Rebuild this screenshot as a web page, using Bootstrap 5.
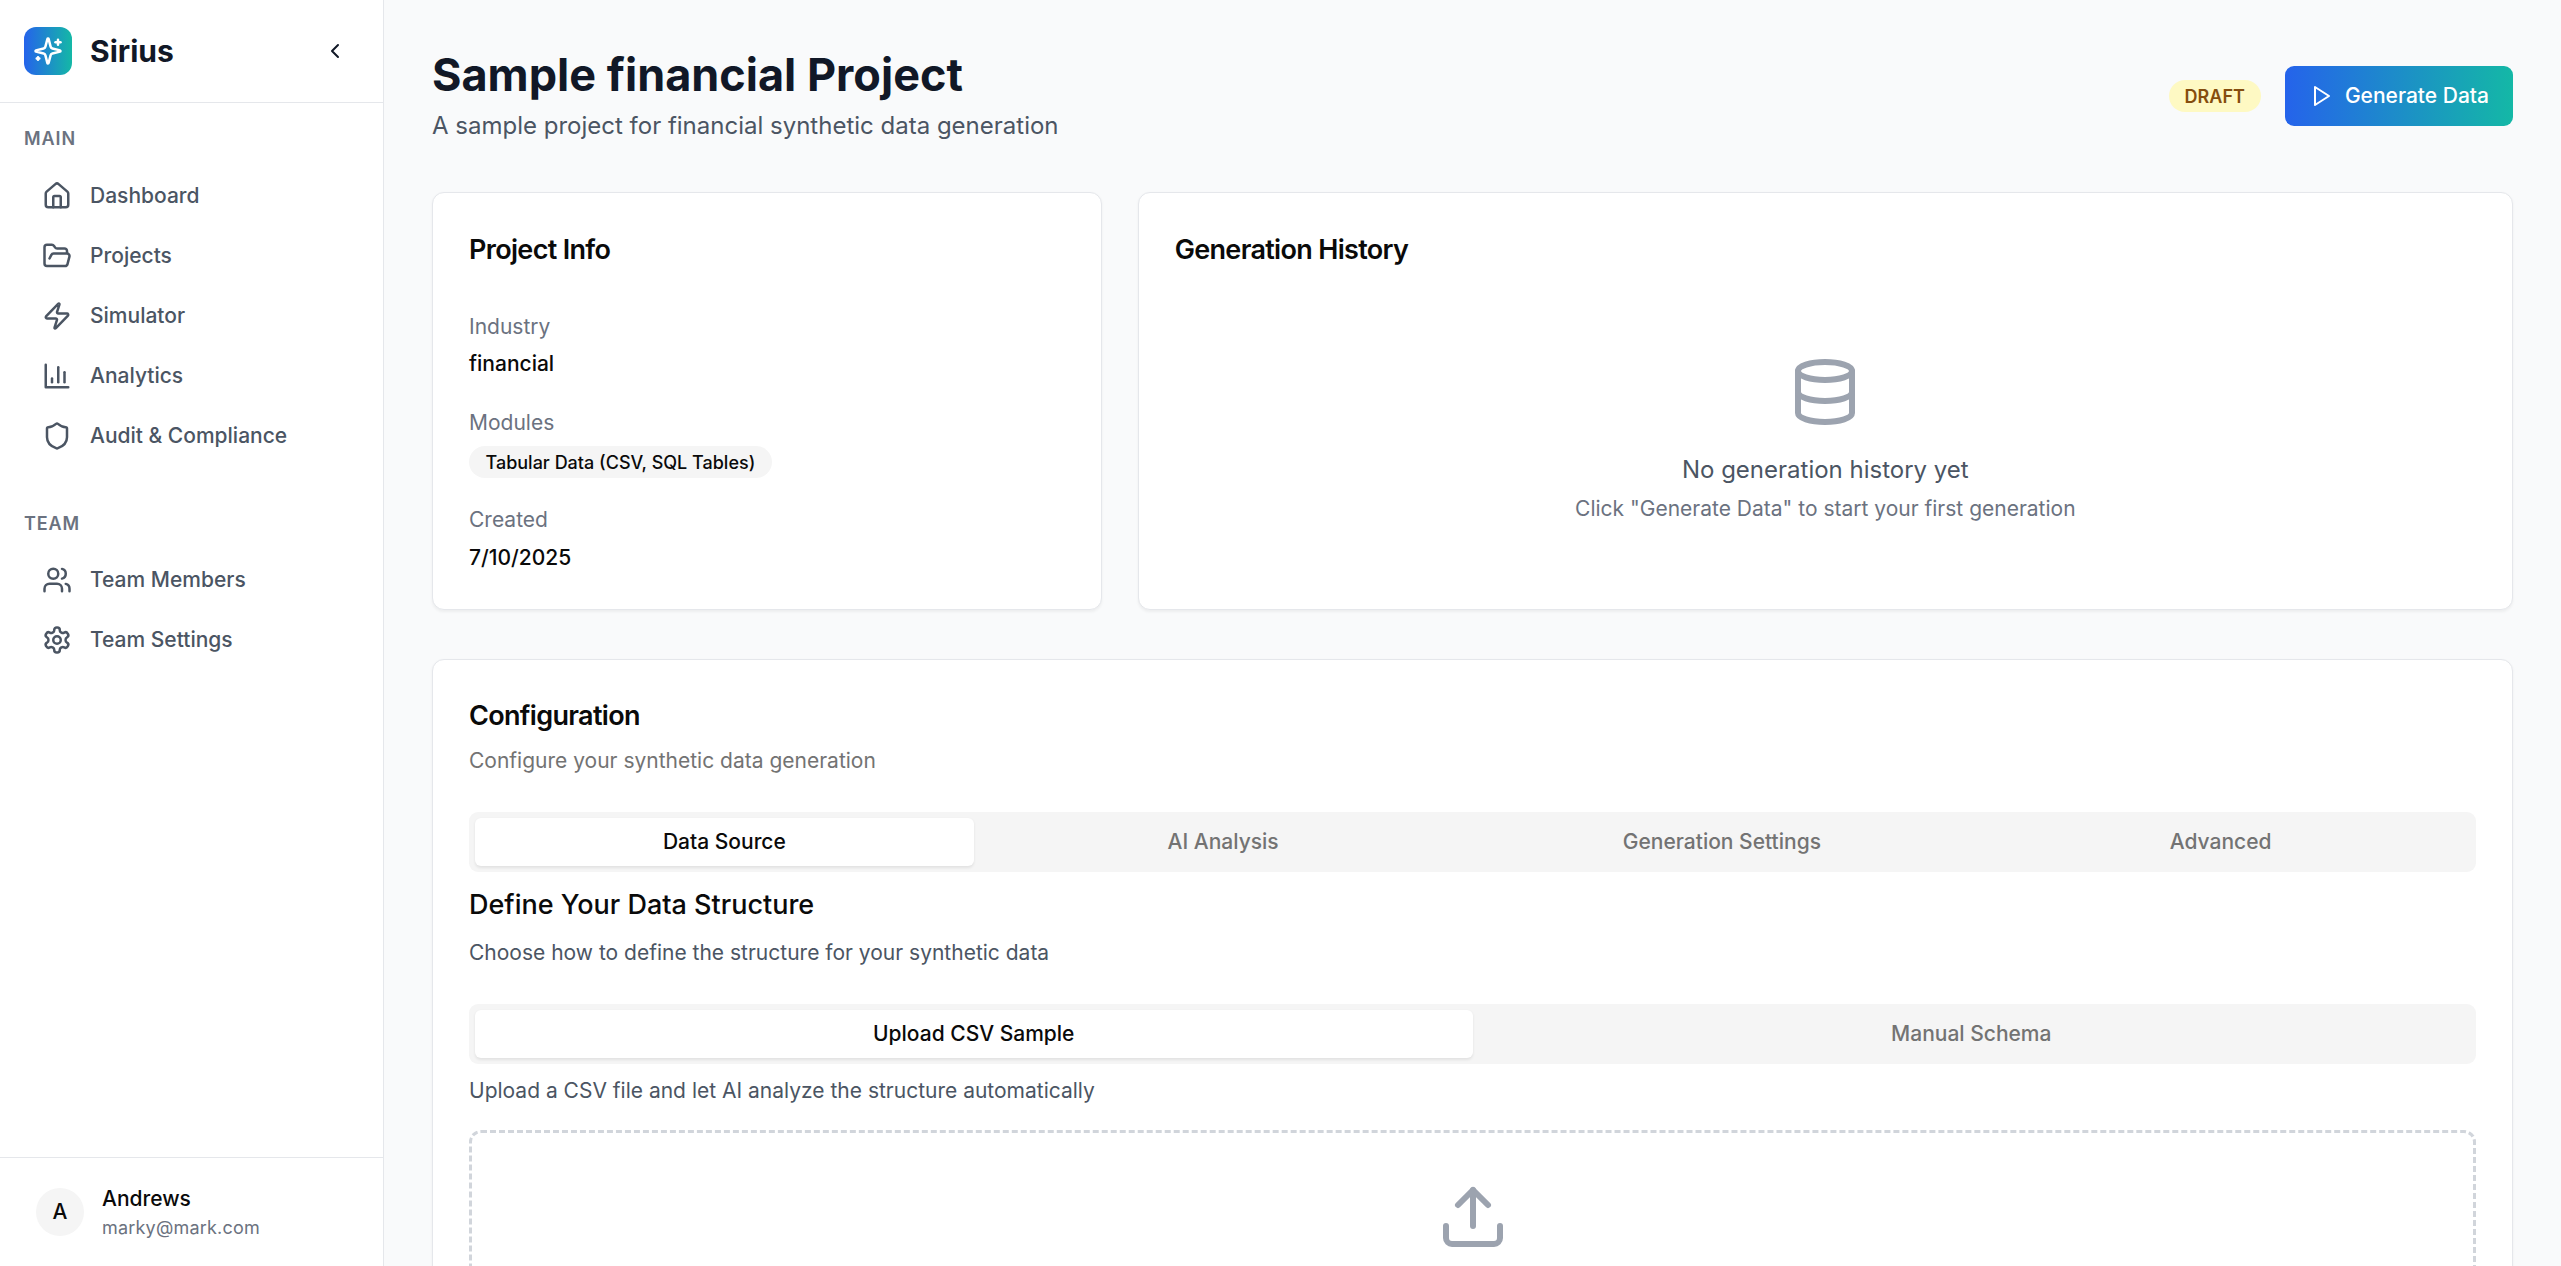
<!DOCTYPE html>
<html lang="en">
<head>
<meta charset="utf-8">
<title>Sample financial Project</title>
<link href="https://cdn.jsdelivr.net/npm/bootstrap@5.3.0/dist/css/bootstrap.min.css" rel="stylesheet">
<style>
html,body{height:100%;overflow:hidden}
body{font-family:Inter,"Liberation Sans",sans-serif;background:#f9fafb;color:#0a0a0a;font-size:21px}
.ic{fill:none;stroke:currentColor;stroke-width:2;stroke-linecap:round;stroke-linejoin:round;flex:none}
.shell{height:100vh}
.side{width:384px;flex:none;background:#fff;border-right:1.5px solid #e5e7eb}
.side-head{height:103px;padding:0 24px;border-bottom:1.5px solid #e5e7eb}
.logo-box{width:48px;height:48px;border-radius:12px;background:linear-gradient(90deg,#2563eb,#14b8a6);color:#fff}
.brand-name{font-size:30px;font-weight:700;color:#111827;line-height:45px;margin-left:18px}
.collapse-ic{color:#111827;margin-right:12px}
.sect-label{font-size:18px;font-weight:600;letter-spacing:.9px;color:#6b7280;line-height:27px;padding-left:24px}
.sect-main{margin-top:22px}
.sect-team{margin-top:44px}
.nav-main{margin-top:14px}
.nav-team{margin-top:13px}
.side-link{height:60px;padding-left:42px;gap:18px;font-size:21px;font-weight:500;color:#4b5563;text-decoration:none}
.side-foot{height:109px;padding-left:36px;border-top:1.5px solid #e5e7eb}
.avatar{width:48px;height:48px;background:#f5f5f5;font-weight:450;color:#0a0a0a;font-size:21px}
.who{margin-left:18px}
.who-name{font-size:21px;font-weight:500;line-height:30px;color:#0a0a0a}
.who-mail{font-size:18px;line-height:27px;color:#6b7280;letter-spacing:.2px}
.main-area{padding:48px;min-width:0;overflow:hidden}
.page-title{font-size:45px;font-weight:700;line-height:54px;color:#111827;margin:0}
.page-sub{font-size:24px;line-height:36px;color:#4b5563;margin:6px 0 0}
.head-row{margin-bottom:48px}
.draft-pill{background:#fef9c3;color:#854d0e;font-size:18px;font-weight:600;line-height:27px;padding:2.5px 16px;border-radius:999px}
.gen-btn{height:60px;padding:0 24px;gap:12px;border:0;border-radius:9px;background:linear-gradient(90deg,#2563eb,#14b8a6);color:#fff;font-size:21px;font-weight:500}
.cards-row{--bs-gutter-x:36px;--bs-gutter-y:0;margin-bottom:49px}
.cards-row .panel-title{margin-top:1px}
.panel{border:1.5px solid #e5e7eb;border-radius:12px;background:#fff;box-shadow:0 1.5px 3px rgba(0,0,0,.05);padding:36px;height:100%}
.panel-title{font-size:27px;font-weight:600;letter-spacing:-.675px;line-height:39px;color:#0a0a0a;margin:0}
.info-first{margin-top:43px}
.info-label{font-size:21px;line-height:30px;color:#6b7280}
.info-value{font-size:21px;font-weight:550;line-height:30px;color:#0a0a0a;margin-top:7px}
.info-mod{margin-top:29px}
.info-made{margin-top:27px}
.info-made + .info-value{margin-top:8px}
.mod-pill{background:#f5f5f5;color:#0a0a0a;font-size:18px;font-weight:550;line-height:27px;padding:2.5px 16.5px;border-radius:999px;margin-top:8px}
.empty-wrap{padding-top:86.5px}
.empty-ic{color:#9ca3af}
.empty-main{font-size:24px;line-height:36px;color:#4b5563;margin-top:24px}
.empty-sub{font-size:21px;line-height:30px;color:#6b7280;margin-top:6px}
.config-sub{font-size:21px;line-height:30px;color:#737373;margin-top:11px}
.seg{background:#f5f5f5;border-radius:9px;padding:6px;height:60px}
.seg-first{margin-top:36px}
.seg-second{margin-top:36px}
.seg-btn{flex:1 1 0;border:0;background:transparent;border-radius:6px;font-size:21px;font-weight:500;color:#737373;padding:0}
.seg-btn.on{background:#fff;color:#0a0a0a;box-shadow:0 1.5px 3px rgba(0,0,0,.08)}
.sec-title{font-size:27px;font-weight:500;line-height:40px;color:#0a0a0a;margin:13px 0 0}
.sec-sub{font-size:21px;line-height:30px;color:#4b5563;margin-top:13px}
.help{font-size:21px;line-height:30px;color:#4b5563;margin-top:12px}
.drop{border:3px dashed #d1d5db;border-radius:12px;padding:48px;margin-top:24px;color:#9ca3af;min-height:400px}
</style>
</head>
<body>
<div class="d-flex shell">
  <aside class="side d-flex flex-column">
    <div class="side-head d-flex align-items-center">
      <span class="logo-box d-flex align-items-center justify-content-center">
        <svg class="ic" width="30" height="30" viewBox="0 0 24 24"><path d="M9.937 15.5A2 2 0 0 0 8.5 14.063l-6.135-1.582a.5.5 0 0 1 0-.962L8.5 9.936A2 2 0 0 0 9.937 8.5l1.582-6.135a.5.5 0 0 1 .963 0L14.063 8.5A2 2 0 0 0 15.5 9.937l6.135 1.581a.5.5 0 0 1 0 .964L15.5 14.063a2 2 0 0 0-1.437 1.437l-1.582 6.135a.5.5 0 0 1-.963 0z"/><path d="M20 3v4"/><path d="M22 5h-4"/><path d="M4 17v2"/><path d="M5 18H3"/></svg>
      </span>
      <span class="brand-name">Sirius</span>
      <svg class="ic collapse-ic ms-auto" width="24" height="24" viewBox="0 0 24 24"><path d="m15 18-6-6 6-6"/></svg>
    </div>
    <div class="sect-label sect-main text-uppercase">Main</div>
    <nav class="nav-main d-flex flex-column">
      <a class="side-link d-flex align-items-center" href="#"><svg class="ic" width="30" height="30" viewBox="0 0 24 24"><path d="M15 21v-8a1 1 0 0 0-1-1h-4a1 1 0 0 0-1 1v8"/><path d="M3 10a2 2 0 0 1 .709-1.528l7-5.999a2 2 0 0 1 2.582 0l7 5.999A2 2 0 0 1 21 10v9a2 2 0 0 1-2 2H5a2 2 0 0 1-2-2z"/></svg>Dashboard</a>
      <a class="side-link d-flex align-items-center" href="#"><svg class="ic" width="30" height="30" viewBox="0 0 24 24"><path d="m6 14 1.5-2.9A2 2 0 0 1 9.24 10H20a2 2 0 0 1 1.94 2.5l-1.54 6a2 2 0 0 1-1.95 1.5H4a2 2 0 0 1-2-2V5a2 2 0 0 1 2-2h3.9a2 2 0 0 1 1.69.9l.81 1.2a2 2 0 0 0 1.67.9H18a2 2 0 0 1 2 2v2"/></svg>Projects</a>
      <a class="side-link d-flex align-items-center" href="#"><svg class="ic" width="30" height="30" viewBox="0 0 24 24"><path d="M4 14a1 1 0 0 1-.78-1.63l9.9-10.2a.5.5 0 0 1 .86.46l-1.92 6.02A1 1 0 0 0 13 10h7a1 1 0 0 1 .78 1.63l-9.9 10.2a.5.5 0 0 1-.86-.46l1.92-6.02A1 1 0 0 0 11 14z"/></svg>Simulator</a>
      <a class="side-link d-flex align-items-center" href="#"><svg class="ic" width="30" height="30" viewBox="0 0 24 24"><path d="M3 3v18h18"/><path d="M18 17V9"/><path d="M13 17V5"/><path d="M8 17v-3"/></svg>Analytics</a>
      <a class="side-link d-flex align-items-center" href="#"><svg class="ic" width="30" height="30" viewBox="0 0 24 24"><path d="M20 13c0 5-3.5 7.5-7.66 8.95a1 1 0 0 1-.67-.01C7.5 20.5 4 18 4 13V6a1 1 0 0 1 1-1c2 0 4.5-1.2 6.24-2.72a1.17 1.17 0 0 1 1.52 0C14.51 3.81 17 5 19 5a1 1 0 0 1 1 1z"/></svg>Audit &amp; Compliance</a>
    </nav>
    <div class="sect-label sect-team text-uppercase">Team</div>
    <nav class="nav-team d-flex flex-column">
      <a class="side-link d-flex align-items-center" href="#"><svg class="ic" width="30" height="30" viewBox="0 0 24 24"><path d="M16 21v-2a4 4 0 0 0-4-4H6a4 4 0 0 0-4 4v2"/><circle cx="9" cy="7" r="4"/><path d="M22 21v-2a4 4 0 0 0-3-3.87"/><path d="M16 3.13a4 4 0 0 1 0 7.75"/></svg>Team Members</a>
      <a class="side-link d-flex align-items-center" href="#"><svg class="ic" width="30" height="30" viewBox="0 0 24 24"><path d="M12.22 2h-.44a2 2 0 0 0-2 2v.18a2 2 0 0 1-1 1.73l-.43.25a2 2 0 0 1-2 0l-.15-.08a2 2 0 0 0-2.73.73l-.22.38a2 2 0 0 0 .73 2.73l.15.1a2 2 0 0 1 1 1.72v.51a2 2 0 0 1-1 1.74l-.15.09a2 2 0 0 0-.73 2.73l.22.38a2 2 0 0 0 2.73.73l.15-.08a2 2 0 0 1 2 0l.43.25a2 2 0 0 1 1 1.73V20a2 2 0 0 0 2 2h.44a2 2 0 0 0 2-2v-.18a2 2 0 0 1 1-1.73l.43-.25a2 2 0 0 1 2 0l.15.08a2 2 0 0 0 2.73-.73l.22-.39a2 2 0 0 0-.73-2.73l-.15-.08a2 2 0 0 1-1-1.74v-.5a2 2 0 0 1 1-1.74l.15-.09a2 2 0 0 0 .73-2.73l-.22-.38a2 2 0 0 0-2.73-.73l-.15.08a2 2 0 0 1-2 0l-.43-.25a2 2 0 0 1-1-1.73V4a2 2 0 0 0-2-2z"/><circle cx="12" cy="12" r="3"/></svg>Team Settings</a>
    </nav>
    <div class="side-foot d-flex align-items-center mt-auto">
      <span class="avatar rounded-circle d-flex align-items-center justify-content-center">A</span>
      <div class="who">
        <div class="who-name">Andrews</div>
        <div class="who-mail">marky@mark.com</div>
      </div>
    </div>
  </aside>
  <main class="main-area flex-grow-1">
    <div class="head-row d-flex justify-content-between align-items-center">
      <div>
        <h1 class="page-title">Sample financial Project</h1>
        <p class="page-sub">A sample project for financial synthetic data generation</p>
      </div>
      <div class="d-flex align-items-center gap-4">
        <span class="draft-pill">DRAFT</span>
        <button class="gen-btn d-flex align-items-center" type="button"><svg class="ic" width="24" height="24" viewBox="0 0 24 24"><path d="M6 3l14 9-14 9z"/></svg>Generate Data</button>
      </div>
    </div>
    <div class="row cards-row">
      <div class="col-4">
        <section class="panel">
          <h2 class="panel-title">Project Info</h2>
          <div class="info-label info-first">Industry</div>
          <div class="info-value">financial</div>
          <div class="info-label info-mod">Modules</div>
          <span class="mod-pill d-inline-block">Tabular Data (CSV, SQL Tables)</span>
          <div class="info-label info-made">Created</div>
          <div class="info-value">7/10/2025</div>
        </section>
      </div>
      <div class="col-8">
        <section class="panel">
          <h2 class="panel-title">Generation History</h2>
          <div class="empty-wrap text-center">
            <svg class="ic empty-ic d-block mx-auto" width="72" height="72" viewBox="0 0 24 24"><ellipse cx="12" cy="5" rx="9" ry="3"/><path d="M3 5V19A9 3 0 0 0 21 19V5"/><path d="M3 12A9 3 0 0 0 21 12"/></svg>
            <div class="empty-main">No generation history yet</div>
            <div class="empty-sub">Click "Generate Data" to start your first generation</div>
          </div>
        </section>
      </div>
    </div>
    <section class="panel">
      <h2 class="panel-title">Configuration</h2>
      <div class="config-sub">Configure your synthetic data generation</div>
      <div class="seg seg-first d-flex">
        <button class="seg-btn on" type="button">Data Source</button>
        <button class="seg-btn" type="button">AI Analysis</button>
        <button class="seg-btn" type="button">Generation Settings</button>
        <button class="seg-btn" type="button">Advanced</button>
      </div>
      <h3 class="sec-title">Define Your Data Structure</h3>
      <div class="sec-sub">Choose how to define the structure for your synthetic data</div>
      <div class="seg seg-second d-flex">
        <button class="seg-btn on" type="button">Upload CSV Sample</button>
        <button class="seg-btn" type="button">Manual Schema</button>
      </div>
      <div class="help">Upload a CSV file and let AI analyze the structure automatically</div>
      <div class="drop text-center">
        <svg class="ic d-block mx-auto" width="72" height="72" viewBox="0 0 24 24"><path d="M21 15v4a2 2 0 0 1-2 2H5a2 2 0 0 1-2-2v-4"/><polyline points="17 8 12 3 7 8"/><line x1="12" y1="3" x2="12" y2="15"/></svg>
      </div>
    </section>
  </main>
</div>
<script src="https://cdn.jsdelivr.net/npm/bootstrap@5.3.0/dist/js/bootstrap.bundle.min.js"></script>
</body>
</html>
